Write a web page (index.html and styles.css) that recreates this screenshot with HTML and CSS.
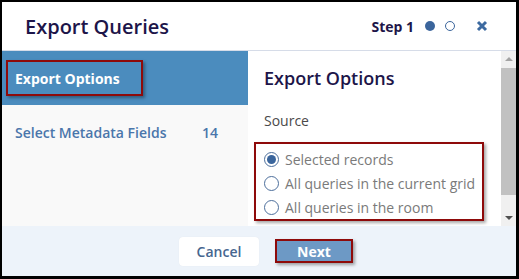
FILE: index.html
```html
<!DOCTYPE html>
<html>
<head>
<meta charset="utf-8">
<link rel="stylesheet" href="styles.css">
</head>
<body>
<div class="dialog">
  <header class="head">
    <h1 class="title">Export Queries</h1>
    <div class="steps">
      <span class="step-label">Step 1</span>
      <span class="dot dot-on"></span>
      <span class="dot dot-off"></span>
      <svg class="close" width="12" height="12" viewBox="0 0 12 12"><path d="M2 2 L10 10 M10 2 L2 10" stroke="#3d6aa0" stroke-width="3" stroke-linecap="butt"/></svg>
    </div>
  </header>
  <div class="main">
    <nav class="side">
      <div class="side-item active"><span class="mark mark-side">Export Options</span></div>
      <div class="side-item"><span class="side-text">Select Metadata Fields</span><span class="count">14</span></div>
    </nav>
    <section class="pane">
      <div class="content">
        <h2 class="pane-title">Export Options</h2>
        <div class="label">Source</div>
        <div class="mark radios">
          <label class="radio"><span class="circle checked"></span>Selected records</label>
          <label class="radio"><span class="circle"></span>All queries in the current grid</label>
          <label class="radio"><span class="circle"></span>All queries in the room</label>
        </div>
      </div>
      <div class="scrollbar">
        <span class="arrow up"></span>
        <span class="thumb"></span>
        <span class="arrow down"></span>
      </div>
    </section>
  </div>
  <footer class="foot">
    <button class="btn cancel">Cancel</button>
    <button class="btn next">Next</button>
  </footer>
</div>
</body>
</html>
```

FILE: styles.css
```css
* { box-sizing: border-box; }
html, body { margin: 0; padding: 0; background: #000; }
body { font-family: "Open Sans", "Noto Sans", sans-serif; }
.dialog {
  width: 519px; height: 279px;
  border-style: solid; border-color: #000;
  border-width: 2px 3px 3px 2px;
  background: #fff;
  display: flex; flex-direction: column;
}
.head {
  height: 49px; flex: none;
  border-bottom: 1px solid #d6dce8;
  display: flex; align-items: center; justify-content: space-between;
  padding: 0 28px 0 23px;
}
.title { margin: 0; font-size: 20px; font-weight: 600; color: #1d1549; letter-spacing: 0; }
.steps { display: flex; align-items: center; }
.step-label { font-size: 14px; font-weight: 700; color: #1d1549; margin-right: 11px; }
.dot { width: 10px; height: 10px; border-radius: 50%; margin-right: 10px; }
.dot-on { background: #3b659c; }
.dot-off { border: 1.5px solid #3b659c; background: #fff; margin-right: 21px; }
.close { display: block; }
.main { flex: 1; display: flex; min-height: 0; }
.side { width: 246px; flex: none; background: #f9f9f9; }
.side-item { height: 55px; display: flex; align-items: center; padding-left: 13px; }
.side-item.active { background: #4b8cbe; padding-left: 4px; height: 54px; }
.mark {
  border: 2px solid #8e0a0a;
  box-shadow: 2px 2px 3px rgba(0,0,0,0.35);
}
.mark-side {
  width: 137px; height: 36px; padding-left: 7px;
  display: flex; align-items: center;
  color: #fff; font-size: 14px; font-weight: 700;
}
.side-text { font-size: 14px; font-weight: 600; color: #4a76ab; width: 187px; }
.count { font-size: 14px; font-weight: 600; color: #4a76ab; }
.pane { flex: 1; display: flex; background: #fff; }
.content { flex: 1; padding-left: 16px; }
.pane-title { margin: 15px 0 0; font-size: 18px; line-height: 24px; font-weight: 600; color: #1d1549; }
.label { margin-top: 21px; font-size: 14px; line-height: 20px; color: #4a4a4a; }
.radios { margin: 11px 0 0 -10px; width: 230px; height: 79px; padding: 3px 0 0 8px; }
.radio { display: flex; align-items: center; height: 24px; font-size: 14px; color: #7a7a7a; }
.circle {
  width: 15px; height: 15px; border-radius: 50%;
  border: 1.5px solid #4d6f9c; margin-right: 6px; background: #fff;
  display: flex; align-items: center; justify-content: center;
}
.circle.checked::after { content: ""; width: 9px; height: 9px; border-radius: 50%; background: #3a659c; }
.scrollbar {
  width: 15px; flex: none; background: #f0f0f0;
  display: flex; flex-direction: column; align-items: center;
}
.arrow { width: 0; height: 0; border-left: 4px solid transparent; border-right: 4px solid transparent; }
.arrow.up { border-bottom: 4px solid #a3a3a3; margin: 6px 0 7px; }
.thumb { width: 15px; height: 127px; background: #c1c1c1; }
.arrow.down { border-top: 4px solid #505050; margin-top: auto; margin-bottom: 6px; }
.foot {
  height: 50px; flex: none; background: #edf3fa;
  display: flex; align-items: center; padding-left: 177px; gap: 16px;
}
.btn { font-family: inherit; font-size: 14px; font-weight: 600; cursor: pointer; }
.cancel { width: 80px; height: 29px; background: #fff; color: #46668f; border: none; border-radius: 4px; box-shadow: 0 0 1px rgba(0,0,0,0.08); }
.next {
  width: 78px; height: 24px; background: #6d99c5; color: #fff; font-weight: 700;
  border: 2px solid #8e0a0a; border-radius: 0;
  box-shadow: 2px 2px 3px rgba(0,0,0,0.35);
}
```
